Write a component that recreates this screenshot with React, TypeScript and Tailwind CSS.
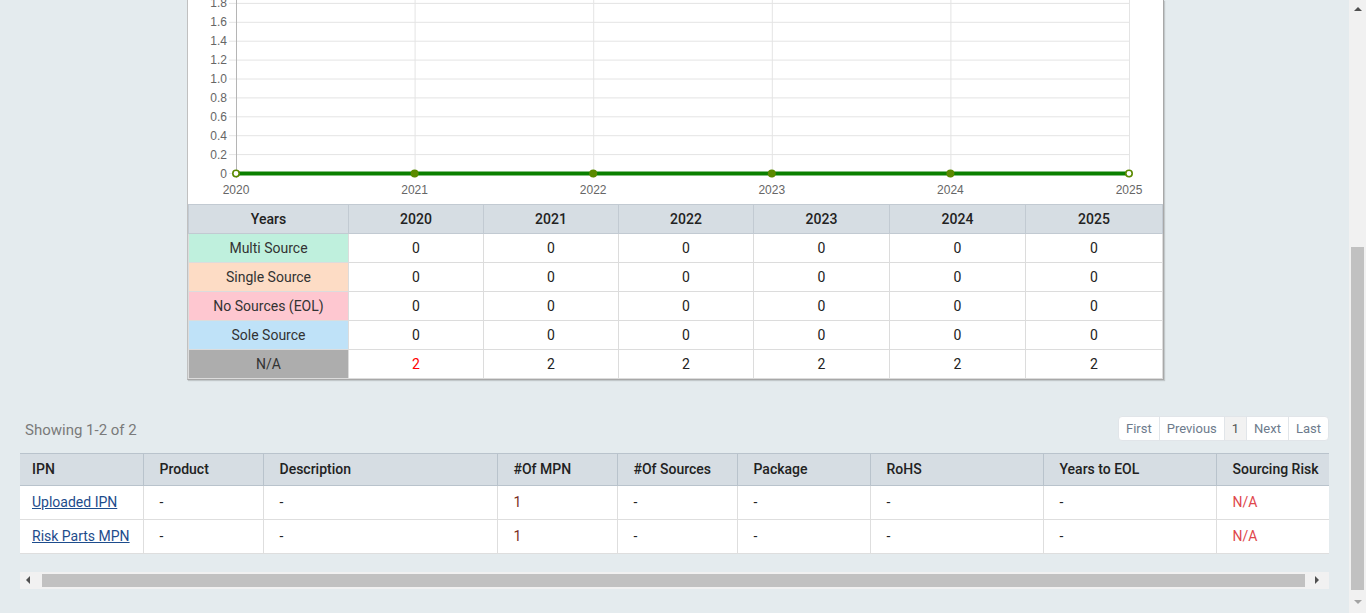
const years = [2020, 2021, 2022, 2023, 2024, 2025];

const sourceRows = [
  { label: "Multi Source", bg: "bg-[#bff0dd]", values: [0, 0, 0, 0, 0, 0] },
  { label: "Single Source", bg: "bg-[#fddcc5]", values: [0, 0, 0, 0, 0, 0] },
  { label: "No Sources (EOL)", bg: "bg-[#fec7d0]", values: [0, 0, 0, 0, 0, 0] },
  { label: "Sole Source", bg: "bg-[#bfe2f8]", values: [0, 0, 0, 0, 0, 0] },
  { label: "N/A", bg: "bg-[#adadad]", values: [2, 2, 2, 2, 2, 2] },
];

const partColumns = [
  { name: "IPN", w: "w-[123px]" },
  { name: "Product", w: "w-[120px]" },
  { name: "Description", w: "w-[234px]" },
  { name: "#Of MPN", w: "w-[120px]" },
  { name: "#Of Sources", w: "w-[120px]" },
  { name: "Package", w: "w-[133px]" },
  { name: "RoHS", w: "w-[173px]" },
  { name: "Years to EOL", w: "w-[173px]" },
  { name: "Sourcing Risk", w: "w-[130px]" },
];

const parts = ["Uploaded IPN", "Risk Parts MPN"];

// plot geometry, in panel coordinates (panel inner edge = x 188 on screen)
const X0 = 48;
const XSTEP = 178.6;
const Y0 = 173;
const YSTEP = 18.9;

function TrendChart() {
  const ticks = [0, 0.2, 0.4, 0.6, 0.8, 1.0, 1.2, 1.4, 1.6, 1.8];
  const xEnd = X0 + XSTEP * 5;
  return (
    <svg width="975" height="204" className="block" style={{ fontFamily: '"Liberation Sans", Arial, sans-serif' }}>
      {ticks.map((t, i) => {
        const y = Y0 - i * YSTEP;
        return (
          <g key={t}>
            <line x1={X0 - 7} x2={xEnd} y1={y + 0.5} y2={y + 0.5} stroke="#e4e4e4" />
            <text x={X0 - 9} y={y + 4.5} textAnchor="end" fontSize="12" fill="#666">
              {t === 0 ? "0" : t.toFixed(1)}
            </text>
          </g>
        );
      })}
      {years.map((yr, i) => {
        const x = X0 + i * XSTEP;
        return (
          <g key={yr}>
            <line x1={x + 0.5} x2={x + 0.5} y1={-10} y2={Y0 + 5} stroke={i === 0 ? "#b5b5b5" : "#e4e4e4"} />
            <text x={x} y={Y0 + 20.5} textAnchor="middle" fontSize="12" fill="#666">
              {yr}
            </text>
          </g>
        );
      })}
      <line x1={X0} x2={xEnd} y1={Y0 + 0.5} y2={Y0 + 0.5} stroke="#0a8000" strokeWidth="4" />
      {years.map((yr, i) => {
        const hollow = i === 0 || i === years.length - 1;
        return (
          <circle
            key={yr}
            cx={X0 + i * XSTEP}
            cy={Y0 + 0.5}
            r="3.2"
            fill={hollow ? "#ffffff" : "#5b8a00"}
            stroke="#5b8a00"
            strokeWidth="1.6"
          />
        );
      })}
    </svg>
  );
}

function SummaryTable() {
  return (
    <table className="w-[974px] table-fixed border-collapse text-[14px] text-[#222]">
      <colgroup>
        <col className="w-[160px]" />
        <col className="w-[135px]" />
        <col className="w-[135px]" />
        <col className="w-[135px]" />
        <col className="w-[136px]" />
        <col className="w-[136px]" />
        <col className="w-[137px]" />
      </colgroup>
      <thead>
        <tr className="h-[29px] bg-[#d6dde3]">
          <th className="border border-[#c2cad2] font-medium">Years</th>
          {years.map((y) => (
            <th key={y} className="border border-[#c2cad2] font-medium">
              {y}
            </th>
          ))}
        </tr>
      </thead>
      <tbody>
        {sourceRows.map((row, ri) => (
          <tr key={row.label} className="h-[29px]">
            <td className={`border border-[#dcdcdc] text-center text-[#333] ${row.bg}`}>{row.label}</td>
            {row.values.map((v, i) => (
              <td
                key={i}
                className={`border border-[#dcdcdc] text-center ${ri === 4 && i === 0 ? "text-[#ff0000]" : ""}`}
              >
                {v}
              </td>
            ))}
          </tr>
        ))}
      </tbody>
    </table>
  );
}

function Pagination() {
  const items = ["First", "Previous", "1", "Next", "Last"];
  return (
    <div className="flex h-[25px] overflow-hidden rounded-[4px] border border-[#e1e5e9] bg-white text-[13px]">
      {items.map((it, i) => (
        <span
          key={it}
          className={`flex items-center px-[7px] ${i > 0 ? "border-l border-[#e1e5e9]" : ""} ${
            it === "1" ? "bg-[#f2f2f2] text-[#555]" : "text-[#6d7b8c]"
          }`}
        >
          {it}
        </span>
      ))}
    </div>
  );
}

function PartsTable() {
  return (
    <div className="overflow-hidden">
      <table className="w-[1326px] table-fixed border-collapse text-left text-[14px] text-[#222]">
        <colgroup>
          {partColumns.map((c) => (
            <col key={c.name} className={c.w} />
          ))}
        </colgroup>
        <thead>
          <tr className="h-[32px] bg-[#d6dde3]">
            {partColumns.map((c, i) => (
              <th
                key={c.name}
                className={`border-y border-[#b9c3cc] font-medium ${i > 0 ? "border-l pl-4" : "pl-3"}`}
              >
                {c.name}
              </th>
            ))}
          </tr>
        </thead>
        <tbody className="bg-white">
          {parts.map((p) => (
            <tr key={p} className="h-[34px] border-b border-[#dedede]">
              <td className="pl-3">
                <a href="#" className="text-[#1d4c8c] underline">
                  {p}
                </a>
              </td>
              <td className="border-l border-[#dedede] pl-4">-</td>
              <td className="border-l border-[#dedede] pl-4">-</td>
              <td className="border-l border-[#dedede] pl-4 text-[#7a2c24]">1</td>
              <td className="border-l border-[#dedede] pl-4">-</td>
              <td className="border-l border-[#dedede] pl-4">-</td>
              <td className="border-l border-[#dedede] pl-4">-</td>
              <td className="border-l border-[#dedede] pl-4">-</td>
              <td className="border-l border-[#dedede] pl-4 text-[#e0474c]">N/A</td>
            </tr>
          ))}
        </tbody>
      </table>
    </div>
  );
}

function HorizontalScrollbar() {
  return (
    <div className="flex h-[17px] items-center bg-[#f1f1f1]">
      <div className="flex w-[16px] justify-center">
        <span className="h-0 w-0 border-y-[4px] border-r-[4px] border-y-transparent border-r-[#505050]" />
      </div>
      <div className="ml-[6px] h-[13px] flex-1 bg-[#c1c1c1]" />
      <div className="flex w-[24px] justify-center">
        <span className="h-0 w-0 border-y-[4px] border-l-[4px] border-y-transparent border-l-[#505050]" />
      </div>
    </div>
  );
}

function VerticalScrollbar() {
  return (
    <div className="flex h-full w-[17px] shrink-0 flex-col items-center bg-[#f1f1f1]">
      <div className="flex h-[17px] items-center justify-center">
        <span className="h-0 w-0 border-x-[4px] border-b-[4px] border-x-transparent border-b-[#505050]" />
      </div>
      <div className="h-[230px]" />
      <div className="h-[343px] w-[13px] bg-[#c1c1c1]" />
      <div className="flex flex-1 items-center justify-center">
        <span className="h-0 w-0 border-x-[4px] border-t-[4px] border-x-transparent border-t-[#a3a3a3]" />
      </div>
    </div>
  );
}

export default function App() {
  return (
    <div
      className="flex h-[613px] w-[1366px] overflow-hidden bg-[#e4ebee]"
      style={{ fontFamily: 'Roboto, "Liberation Sans", Arial, sans-serif' }}
    >
      <main className="min-w-0 flex-1">
        <section className="ml-[187px] w-[977px] border-x border-b border-l-[#c0c0c0] border-r-[#a8a8a8] border-b-[#a8a8a8] bg-white shadow-[1px_1px_1px_rgba(0,0,0,0.15)]">
          <TrendChart />
          <SummaryTable />
        </section>

        <section className="px-5">
          <div className="mt-[36px] flex items-center justify-between">
            <p className="mt-[3px] pl-[5px] text-[15px] text-[#7a7a7a]">Showing 1-2 of 2</p>
            <Pagination />
          </div>
          <div className="mt-[11px]">
            <PartsTable />
          </div>
          <div className="mt-[18px]">
            <HorizontalScrollbar />
          </div>
        </section>
      </main>
      <VerticalScrollbar />
    </div>
  );
}
